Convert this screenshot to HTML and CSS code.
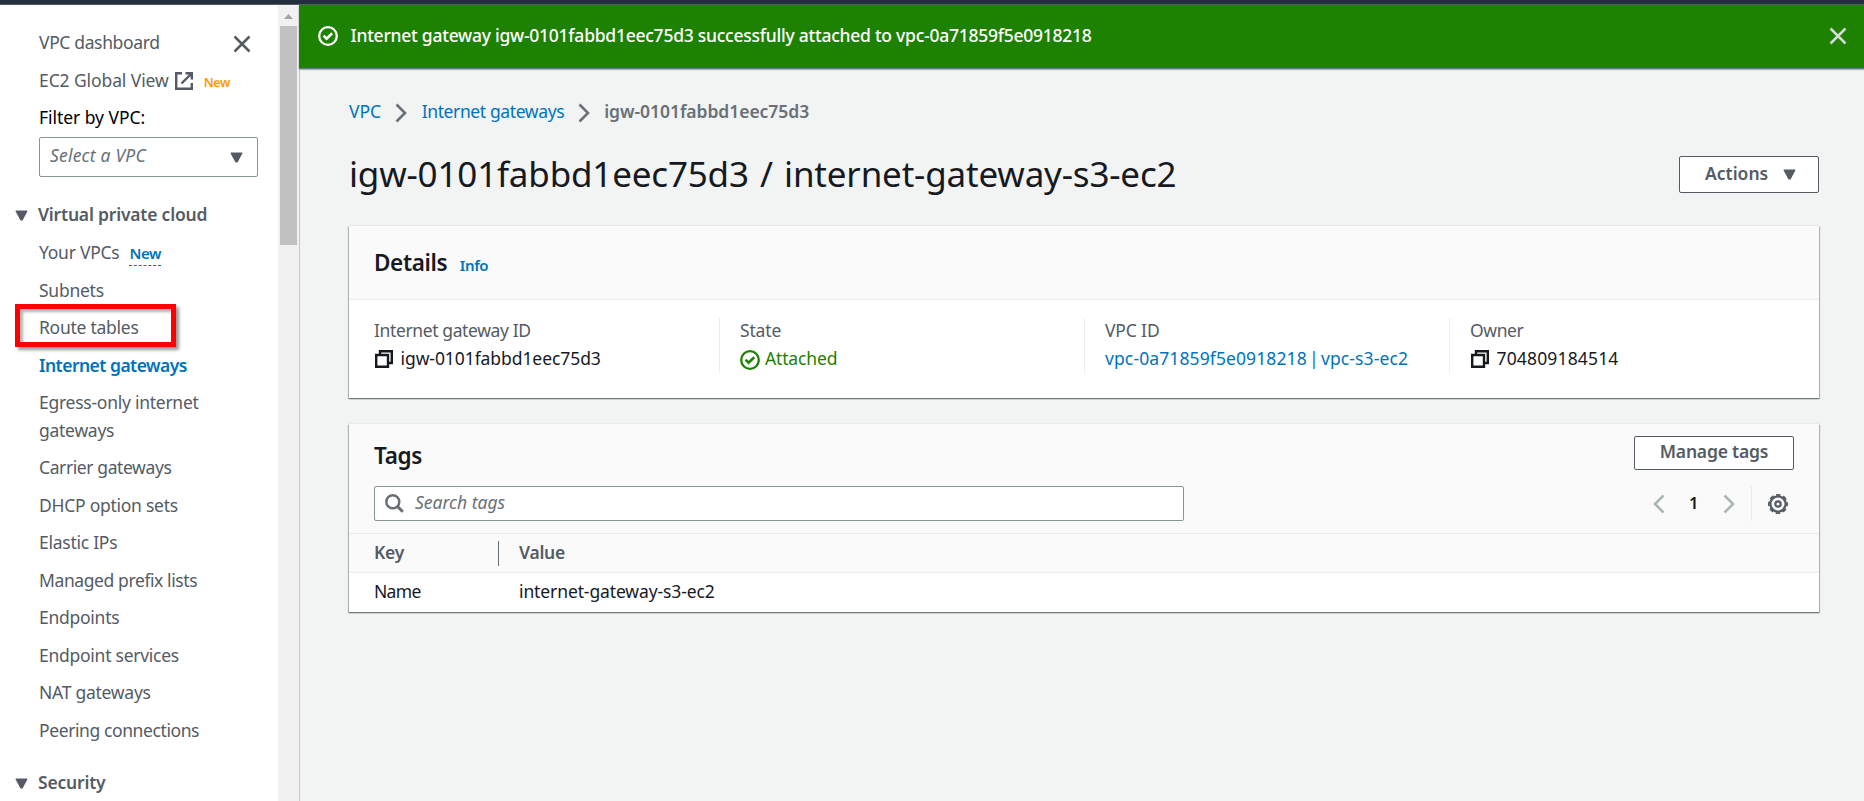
FILE: index.html
```
<!DOCTYPE html>
<html lang="en">
<head>
<meta charset="utf-8">
<title>Internet gateway | VPC Console</title>
<link rel="stylesheet" href="styles.css">
</head>
<body>
<div class="topbar"></div>
<div class="shell">
  <aside class="sidebar">
    <nav class="nav">
      <div class="nav-head">
        <a class="link">VPC dashboard</a>
        <svg class="close" viewBox="0 0 18 18" width="18" height="18"><path d="M1.5 1.5l15 15M16.500 1.500l-15 15" fill="none" stroke="#545b64" stroke-width="2.500"/></svg>
      </div>
      <div class="nav-row">
        <a class="link global">EC2 Global View</a>
        <svg class="external" viewBox="0 0 18 18" width="18" height="18"><path d="M7 1.200H1.200v15.600h15.600V11M10.500 1.200h6.300v6.300M16.500 1.500L6.500 11.500" fill="none" stroke="#545b64" stroke-width="2.400"/></svg>
        <span class="badge-new">New</span>
      </div>
      <div class="filter-label">Filter by VPC:</div>
      <div class="select"><span>Select a VPC</span><svg viewBox="0 0 13 11" width="13" height="11"><path d="M1 .5h11l.5.8L7.500 10.500h-2L.5 1.300z" fill="#545b64"/></svg></div>

      <div class="group"><svg viewBox="0 0 13 11" width="13" height="11"><path d="M1 .5h11l.5.8L7.500 10.500h-2L.5 1.300z" fill="#545b64"/></svg><span>Virtual private cloud</span></div>
      <ul class="items">
        <li class="first">Your VPCs<span class="info-new">New</span></li>
        <li>Subnets</li>
        <li class="marked">Route tables</li>
        <li class="active">Internet gateways</li>
        <li>Egress-only internet gateways</li>
        <li class="tight">Carrier gateways</li>
        <li>DHCP option sets</li>
        <li>Elastic IPs</li>
        <li class="tight">Managed prefix lists</li>
        <li>Endpoints</li>
        <li>Endpoint services</li>
        <li>NAT gateways</li>
        <li class="tight">Peering connections</li>
      </ul>
      <div class="group second"><svg viewBox="0 0 13 11" width="13" height="11"><path d="M1 .5h11l.5.8L7.500 10.500h-2L.5 1.300z" fill="#545b64"/></svg><span>Security</span></div>
    </nav>
    <div class="scrollbar">
      <svg viewBox="0 0 9 5" width="9" height="5"><path d="M0 5L4.500 0L9 5z" fill="#a3a3a3"/></svg>
      <div class="thumb"></div>
    </div>
  </aside>

  <main class="main">
    <div class="flash">
      <svg viewBox="0 0 20 20" width="20" height="20" fill="none" stroke="#fff" stroke-width="2.300"><circle cx="10" cy="10" r="8.800"/><path d="M5.600 9.600l3 3 5.600-5.400" stroke-width="2.600"/></svg>
      <span>Internet gateway igw-0101fabbd1eec75d3 successfully attached to vpc-0a71859f5e0918218</span>
      <svg class="dismiss" viewBox="0 0 18 18" width="18" height="18"><path d="M1.500 1.500l15 15M16.500 1.500l-15 15" fill="none" stroke="#d5dbdb" stroke-width="2.500"/></svg>
    </div>
    <div class="content">
      <div class="crumbs">
        <a class="crumb-vpc">VPC</a>
        <svg viewBox="0 0 12 20" width="12" height="20"><path d="M1.500 1.500L10 10l-8.500 8.500" fill="none" stroke="#687078" stroke-width="2.600"/></svg>
        <a class="crumb-igw">Internet gateways</a>
        <svg viewBox="0 0 12 20" width="12" height="20"><path d="M1.500 1.500L10 10l-8.500 8.500" fill="none" stroke="#687078" stroke-width="2.600"/></svg>
        <b>igw-0101fabbd1eec75d3</b>
      </div>
      <div class="title-row">
        <h1>igw-0101fabbd1eec75d3 / internet-gateway-s3-ec2</h1>
        <button class="btn actions"><span>Actions</span><svg viewBox="0 0 13 11" width="13" height="11"><path d="M1 .5h11l.5.8L7.500 10.500h-2L.5 1.300z" fill="#545b64"/></svg></button>
      </div>

      <section class="card details">
        <header><h2>Details</h2><a class="info">Info</a></header>
        <div class="columns">
          <div class="col">
            <div class="label wide-label">Internet gateway ID</div>
            <div class="value"><svg class="copy" viewBox="0 0 18 18" width="18" height="18" fill="none" stroke="#16191f" stroke-width="2.400"><path d="M1.200 5h11.800v11.800H1.200zM5 5V1.200h11.800V13H13"/></svg><span class="id">igw-0101fabbd1eec75d3</span></div>
          </div>
          <div class="col">
            <div class="label">State</div>
            <div class="value ok"><svg viewBox="0 0 20 20" width="20" height="20" fill="none" stroke="#1d8102" stroke-width="2.300"><circle cx="10" cy="10" r="8.800"/><path d="M5.600 9.600l3 3 5.600-5.400" stroke-width="2.600"/></svg><span>Attached</span></div>
          </div>
          <div class="col">
            <div class="label">VPC ID</div>
            <div class="value"><a class="vpc-link">vpc-0a71859f5e0918218 | vpc-s3-ec2</a></div>
          </div>
          <div class="col">
            <div class="label wide-label">Owner</div>
            <div class="value"><svg class="copy" viewBox="0 0 18 18" width="18" height="18" fill="none" stroke="#16191f" stroke-width="2.400"><path d="M1.200 5h11.800v11.800H1.200zM5 5V1.200h11.800V13H13"/></svg><span class="owner">704809184514</span></div>
          </div>
        </div>
      </section>

      <section class="card tags">
        <div class="tags-head">
          <div class="tags-title"><h2>Tags</h2><button class="btn manage">Manage tags</button></div>
          <div class="tools">
            <div class="search"><svg viewBox="0 0 19 19" width="19" height="19" fill="none" stroke="#687078"><circle cx="7.800" cy="7.800" r="6.500" stroke-width="2.500"/><path d="M12.400 12.400l5.400 5.400" stroke-width="3"/></svg><span>Search tags</span></div>
            <div class="pager">
              <svg viewBox="0 0 12 20" width="12" height="20"><path d="M10.500 1.500L2 10l8.500 8.500" fill="none" stroke="#aab7b8" stroke-width="2.600"/></svg>
              <b>1</b>
              <svg viewBox="0 0 12 20" width="12" height="20"><path d="M1.500 1.500L10 10l-8.500 8.500" fill="none" stroke="#aab7b8" stroke-width="2.600"/></svg>
              <i class="rule"></i>
              <svg viewBox="0 0 20 20" width="20" height="20" fill="none" stroke="#545b64"><circle cx="10" cy="10" r="7.600" stroke-width="2.200"/><circle cx="10" cy="10" r="9.100" stroke-width="1.800" stroke-dasharray="4.400 2.747" stroke-dashoffset="2.200"/><circle cx="10" cy="10" r="2.700" stroke-width="2.200"/></svg>
            </div>
          </div>
        </div>
        <div class="row head"><div class="key">Key</div><div class="val">Value</div></div>
        <div class="row"><div class="key name">Name</div><div class="val plain">internet-gateway-s3-ec2</div></div>
      </section>
    </div>
  </main>
</div>
</body>
</html>
```
FILE: styles.css
```
*, *::after { box-sizing: border-box; }
body {
  margin: 0;
  height: 801px;
  overflow: hidden;
  display: flex;
  flex-direction: column;
  background: #f2f3f3;
  color: #16191f;
  font: 400 17.5px/27.5px "Noto Sans", "Open Sans", sans-serif;
  letter-spacing: -0.26px;
}
svg { display: block; flex: none; }
h1, h2, ul { margin: 0; padding: 0; font-weight: 400; }
.topbar { flex: none; height: 5px; background: #232f3e; border-bottom: 1px solid #545b64; }
.shell { flex: 1; display: flex; min-height: 0; }

/* Sidebar */
.sidebar { width: 300px; flex: none; display: flex; background: #fff; border-right: 1px solid #c4c8c8; overflow: hidden; }
.nav { width: 278px; flex: none; padding: 24px 20px 0 39px; color: #545b64; }
.nav-head { display: flex; justify-content: space-between; align-items: center; height: 27.5px; padding-right: 7px; letter-spacing: -0.36px; }
.nav-head .close { margin-top: 3px; }
.nav-row { display: flex; align-items: center; height: 27.5px; margin-top: 10.500px; }
.global { letter-spacing: -0.1px; }
.external { margin-left: 6px; }
.badge-new { color: #ff9900; font-size: 12.5px; font-weight: 600; margin-left: 11px; padding-top: 3px; letter-spacing: -0.3px; }
.filter-label { color: #000; margin-top: 9px; letter-spacing: -0.05px; }
.select {
  display: flex; align-items: center; justify-content: space-between;
  height: 40px; margin-top: 6px; padding: 0 14px 0 10px;
  border: 1px solid #879596; border-radius: 2px; background: #fff;
  color: #687078; font-style: italic; letter-spacing: 0.2px;
}
.select span { margin-top: -2px; }
.group { display: flex; align-items: center; gap: 10px; margin: 24px 0 0 -24px; font-weight: 600; white-space: nowrap; letter-spacing: -0.2px; }
.group svg { margin-top: 2px; }
.group.second { margin-top: 24.5px; }
.items { list-style: none; margin-top: 10.500px; }
.items li { margin-bottom: 10px; }
.items li:last-child { margin-bottom: 0; }
.items .tight { letter-spacing: -0.4px; }
.items .active { color: #0073bb; font-weight: 600; letter-spacing: -0.52px; }
.first { display: flex; align-items: flex-start; height: 27.5px; }
.info-new { color: #0073bb; font-size: 15px; line-height: 21px; height: 23px; font-weight: 600; margin: 4px 0 0 10px; border-bottom: 1px dashed #0073bb; letter-spacing: -0.4px; }
.marked { position: relative; }
.marked::after {
  content: ""; position: absolute; left: -24px; top: -10px; width: 161px; height: 43px;
  border: 5px solid #fe0000; box-shadow: 3px 3px 3px rgba(0,0,0,.4), inset 3px 3px 3px rgba(0,0,0,.3);
}
.scrollbar { width: 21px; flex: none; background: #f1f1f1; padding-left: 2px; }
.scrollbar svg { margin: 9px 0 0 4px; }
.thumb { width: 17px; height: 219px; margin-top: 7px; background: #c1c1c1; }

/* Main */
.main { flex: 1; min-width: 0; }
.flash {
  display: flex; align-items: center; height: 63px; padding: 0 17px 0 19px;
  margin-left: -1px; background: #1d8102; color: #fff; font-weight: 500;
  box-shadow: 0 1px 1px #6c7778, 0 2px 1px #b9bfc0;
  position: relative;
}
.flash svg { margin-top: -1px; }
.flash span { margin: -2px auto 0 12.5px; letter-spacing: -0.25px; }
.content { padding: 30px 45px 0 49px; }
.crumbs { display: flex; align-items: center; height: 27.5px; color: #0073bb; }
.crumbs svg { margin: 2px 15px 0 13.500px; }
.crumb-vpc { letter-spacing: 0; }
.crumb-igw { letter-spacing: -0.38px; }
.crumbs b { color: #687078; font-weight: 600; letter-spacing: -0.05px; margin-left: -0.5px; }
.title-row { display: flex; justify-content: space-between; align-items: flex-start; margin-top: 25px; height: 45px; }
h1 { font-size: 35px; line-height: 45px; letter-spacing: -0.18px; word-spacing: 2.300px; }
.btn {
  display: flex; align-items: center; background: #fff; color: #545b64;
  border: 1px solid #545b64; border-radius: 2px; font: inherit; font-weight: 600; padding: 0 25px;
}
.actions { height: 37px; width: 140px; margin-top: 5px; justify-content: space-between; padding-right: 22px; letter-spacing: 0; }
.actions span { margin-top: -1px; }
.actions svg { margin-top: 1px; }

.card { background: #fff; box-shadow: 0 1px 1px #6f7b7c, 1px 1px 1px #b9bfc0, -1px 1px 1px #b9bfc0, 0 -1px 1px #e9ebeb; }
h2 { font-size: 22.5px; line-height: 30px; font-weight: 600; }
.details { height: 172px; margin-top: 30.5px; }
.details header { display: flex; align-items: baseline; height: 74px; padding: 21.5px 25px 0; background: #fafafa; border-bottom: 1px solid #eaeded; }
.details h2 { letter-spacing: -0.35px; }
.info { margin-left: 12.5px; color: #0073bb; font-size: 15px; font-weight: 600; letter-spacing: -0.4px; }
.columns { display: flex; padding: 18px 0 0 25px; }
.col { width: 365px; height: 55px; flex: none; }
.col + .col { border-left: 1px solid #eaeded; padding-left: 20px; margin-left: -20px; width: 385px; }
.col:last-child { width: 345px; }
.label { color: #545b64; margin-top: -1px; letter-spacing: -0.15px; }
.wide-label { letter-spacing: -0.38px; }
.value { display: flex; align-items: center; height: 28px; }
.value svg { margin-top: 1px; }
.value .copy { margin: 0 0 0 0.5px; }
.copy + span { margin-left: 8px; }
.id { letter-spacing: -0.07px; }
.owner { letter-spacing: 0.16px; }
.ok { color: #1d8102; letter-spacing: -0.15px; }
.ok svg { margin-top: 3px; }
.ok span { margin-left: 5px; }
.vpc-link { color: #0073bb; letter-spacing: 0.11px; word-spacing: -2.500px; }

.tags { height: 188px; margin-top: 26px; }
.tags-head { height: 110px; padding: 12px 25px 0; background: #fafafa; border-bottom: 1px solid #eaeded; }
.tags-title { display: flex; justify-content: space-between; align-items: flex-start; height: 50px; }
.tags h2 { margin-top: 5px; letter-spacing: -0.3px; }
.manage { width: 160px; height: 34px; justify-content: center; padding: 0 0 3px; letter-spacing: -0.2px; }
.tools { display: flex; justify-content: space-between; height: 35px; }
.search { width: 810px; display: flex; align-items: center; padding-left: 10px; background: #fff; border: 1px solid #879596; border-radius: 2px; color: #687078; font-style: italic; letter-spacing: 0; }
.search span { margin: -2px 0 0 11px; }
.pager { display: flex; align-items: center; padding-right: 6px; }
.pager b { width: 58px; padding-right: 1px; text-align: center; font-weight: 600; margin-top: -2px; font-size: 16.5px; }
.rule { width: 1px; height: 35px; background: #eaeded; margin: 0 16px 0 16px; }
.row { display: flex; height: 39px; padding-top: 5px; }
.row.head { background: #fafafa; border-bottom: 1px solid #eaeded; color: #545b64; font-weight: 600; }
.key { width: 150px; flex: none; padding-left: 25px; }
.head .key { border-right: 1px solid #687078; margin: 2px 0; height: 25px; line-height: 23px; }
.name { letter-spacing: -0.7px; }
.val { padding-left: 20px; }
.plain { letter-spacing: -0.11px; }
```
